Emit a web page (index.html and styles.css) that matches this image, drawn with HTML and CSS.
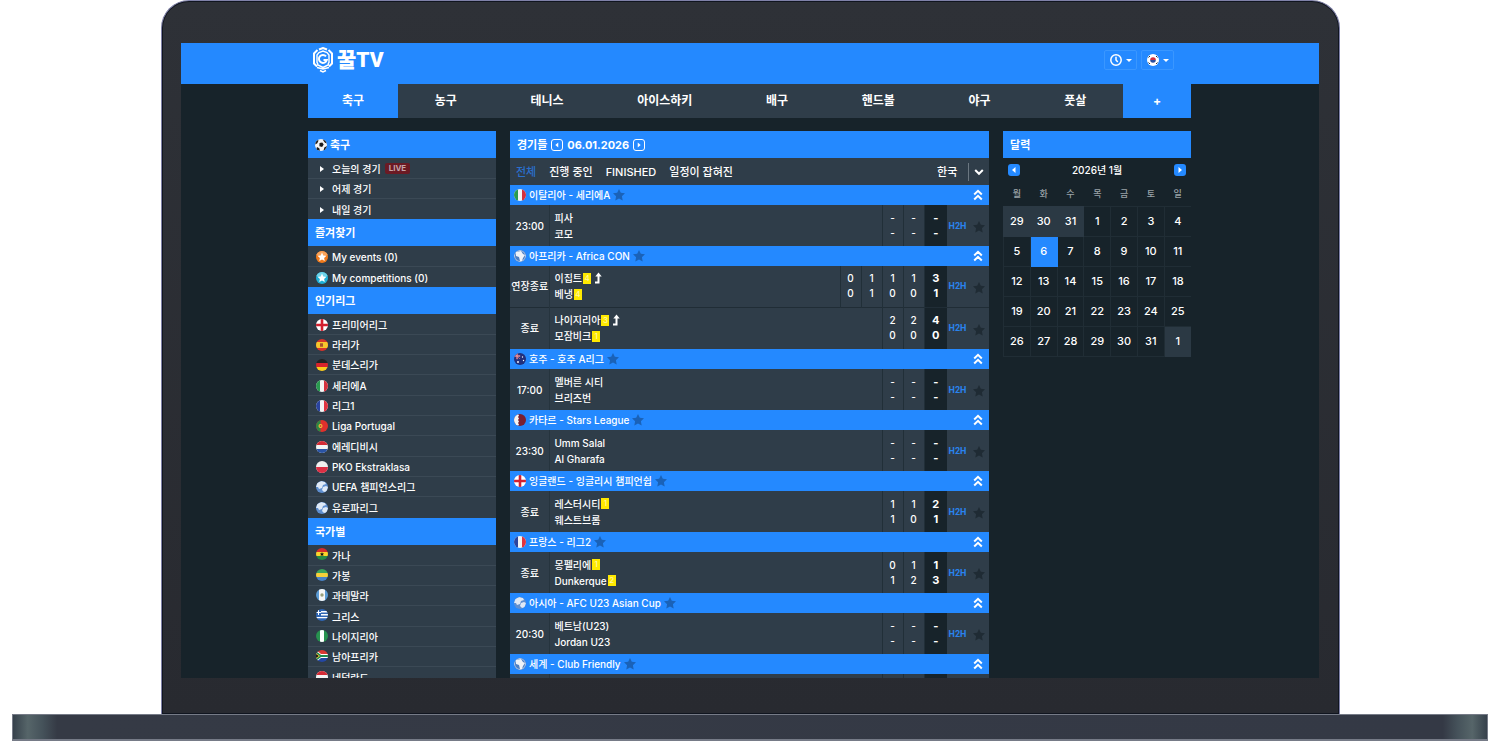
FILE: index.html
```html
<!DOCTYPE html>
<html lang="ko">
<head>
    <meta charset="UTF-8">
    <meta name="viewport" content="width=device-width, initial-scale=1.0">
    <title>꿀TV</title>
    <link rel="stylesheet" href="styles.css">
</head>
<body>
    <svg class="sprite" aria-hidden="true">
        <symbol id="ball" viewBox="0 0 12 12"><rect width="12" height="12" fill="#f4f4f4"/><path d="M4.5 4l2.8-.6 1.4 2.2-1.6 2.3-2.7-.6zM0 3l2-2 1.6.6L2.3 4.3.4 5.6zM8 0l3 1.6 1 3-2-.8-1.6-2zM2 8l2.3 1.3.6 2.7L1 11zM9.3 8.4L12 7v4l-3.6 1z" fill="#1b1b1b"/></symbol>
        <symbol id="star-orange" viewBox="0 0 12 12"><rect width="12" height="12" fill="#f07a1c"/><path d="M0 0h12v4Q6 6 0 4z" fill="#f9a35a"/><path d="M6 1.500l1.300 3 3.200.3-2.400 2.100.7 3.200L6 8.400l-2.800 1.700.7-3.200L1.500 4.800l3.200-.3z" fill="#fff"/></symbol>
        <symbol id="star-cyan" viewBox="0 0 12 12"><rect width="12" height="12" fill="#1fb0d8"/><path d="M0 0h12v4Q6 6 0 4z" fill="#6fd3ea"/><path d="M6 1.500l1.300 3 3.200.3-2.400 2.100.7 3.200L6 8.400l-2.800 1.700.7-3.200L1.500 4.800l3.200-.3z" fill="#fff"/></symbol>
        <symbol id="england" viewBox="0 0 12 12"><rect width="12" height="12" fill="#fff"/><path d="M4.700 0h2.600v12H4.700zM0 4.700h12v2.600H0z" fill="#d3202f"/></symbol>
        <symbol id="spain" viewBox="0 0 12 12"><rect width="12" height="12" fill="#d8342b"/><rect y="3" width="12" height="6" fill="#f8c62c"/><path d="M4 4.300h3v3.400H4z" fill="#a8542c"/></symbol>
        <symbol id="germany" viewBox="0 0 12 12"><rect width="12" height="4" fill="#222"/><rect y="4" width="12" height="4" fill="#d8232b"/><rect y="8" width="12" height="4" fill="#fbcb1d"/></symbol>
        <symbol id="italy" viewBox="0 0 12 12"><rect width="12" height="12" fill="#f4f4f4"/><rect width="4" height="12" fill="#2a9a50"/><rect x="8" width="4" height="12" fill="#d3303d"/></symbol>
        <symbol id="france" viewBox="0 0 12 12"><rect width="12" height="12" fill="#f4f4f4"/><rect width="4" height="12" fill="#2a449f"/><rect x="8" width="4" height="12" fill="#df3440"/></symbol>
        <symbol id="portugal" viewBox="0 0 12 12"><rect width="12" height="12" fill="#e0302d"/><rect width="4.500" height="12" fill="#2d8744"/><circle cx="4.500" cy="6" r="2" fill="#f5c53a"/><circle cx="4.500" cy="6" r="1" fill="#d83a35"/></symbol>
        <symbol id="netherlands" viewBox="0 0 12 12"><rect width="12" height="12" fill="#f4f4f4"/><rect width="12" height="4" fill="#d42b35"/><rect y="8" width="12" height="4" fill="#2a54a5"/></symbol>
        <symbol id="poland" viewBox="0 0 12 12"><rect width="12" height="12" fill="#f0f0f0"/><rect y="6" width="12" height="6" fill="#dc2f44"/></symbol>
        <symbol id="globe" viewBox="0 0 12 12"><rect width="12" height="12" fill="#5f8fd0"/><path d="M1 2l4-2 4 1 1 2-3 1-1 3-3 1-1-2-2 0zM7 6l3-1 2 1-1 4-3 1-2-2z" fill="#dfe9f6"/></symbol>
        <symbol id="africa" viewBox="0 0 12 12"><rect width="12" height="12" fill="#4d7fc4"/><circle cx="6" cy="6" r="5.500" fill="none" stroke="#b9cdea"/><path d="M2 2l5-1 2 3 2 1-2 3-1 3-2 0-1-4-3-1z" fill="#eef2f8"/></symbol>
        <symbol id="ghana" viewBox="0 0 12 12"><rect width="12" height="4" fill="#d52d2d"/><rect y="4" width="12" height="4" fill="#fbd32c"/><rect y="8" width="12" height="4" fill="#278a47"/><path d="M6 4l.6 1.500h1.500L7 6.500l.4 1.500L6 7.200 4.600 8 5 6.500 3.900 5.500h1.500z" fill="#111"/></symbol>
        <symbol id="gabon" viewBox="0 0 12 12"><rect width="12" height="4" fill="#3da35c"/><rect y="4" width="12" height="4" fill="#f6d03a"/><rect y="8" width="12" height="4" fill="#4a83c6"/></symbol>
        <symbol id="guatemala" viewBox="0 0 12 12"><rect width="12" height="12" fill="#5b9bd5"/><rect x="3" width="6" height="12" fill="#f6f6f6"/><circle cx="6" cy="6" r="1.700" fill="#9aa07c"/></symbol>
        <symbol id="greece" viewBox="0 0 12 12"><rect width="12" height="12" fill="#2f66b5"/><path d="M5 2h7v1.500H5zM5 5h7v1.500H5zM0 8h12v1.300H0zM0 3h5v1H0zM2 0h1v6H2z" fill="#fff"/></symbol>
        <symbol id="nigeria" viewBox="0 0 12 12"><rect width="12" height="12" fill="#27924f"/><rect x="4" width="4" height="12" fill="#fff"/></symbol>
        <symbol id="south-africa" viewBox="0 0 12 12"><rect width="12" height="6" fill="#d93a34"/><rect y="6" width="12" height="6" fill="#2447a3"/><path d="M0 0l5 4h7v4H5l-5 4z" fill="#fff"/><path d="M0 1l5 4h7v2H5l-5 4z" fill="#1f8a50"/><path d="M0 3l4 3-4 3z" fill="#f5c433"/><path d="M0 4l2.700 2L0 8z" fill="#111"/></symbol>
        <symbol id="australia" viewBox="0 0 12 12"><rect width="12" height="12" fill="#22307c"/><path d="M0 2.500h6v1H0zM2.600 0h1v6h-1zM0 0l6 6" fill="#e04852" stroke="#e8a0a8" stroke-width=".5"/><circle cx="8.500" cy="4" r=".7" fill="#fff"/><circle cx="9.500" cy="7.500" r=".7" fill="#fff"/><circle cx="4" cy="9" r=".9" fill="#fff"/></symbol>
        <symbol id="qatar" viewBox="0 0 12 12"><rect width="12" height="12" fill="#7a2030"/><path d="M0 0h4l1 1.500L4 3l1 1.500L4 6l1 1.500L4 9l1 1.500L4 12H0z" fill="#f4f4f4"/></symbol>
        <symbol id="korea" viewBox="0 0 12 12"><rect width="12" height="12" fill="#fff"/><path d="M3.200 6a2.800 2.800 0 015.600 0z" fill="#d5303e"/><path d="M3.200 6a2.800 2.800 0 005.600 0z" fill="#2a4fa0"/><path d="M1.500 3.500l1.500-1.500M9 2l1.500 1.500M1.500 8.500L3 10M9 10l1.500-1.500" stroke="#333" stroke-width="1"/></symbol>
        <symbol id="star" viewBox="0 0 12 12"><path d="M6 0l1.800 3.800 4.200.5-3.100 2.900.8 4.300L6 9.400l-3.700 2.100.8-4.300L0 4.300l4.200-.5z" fill="currentColor"/></symbol>
        <symbol id="chevrons" viewBox="0 0 10 12"><path d="M1.200 5.400L5 1.800l3.800 3.600M1.200 10.400L5 6.800l3.800 3.600" fill="none" stroke="currentColor" stroke-width="2"/></symbol>
        <symbol id="left" viewBox="0 0 12 12"><path d="M7.500 3v6L4 6z" fill="currentColor"/></symbol>
        <symbol id="right" viewBox="0 0 12 12"><path d="M4.500 3v6L8 6z" fill="currentColor"/></symbol>
        <symbol id="advance" viewBox="0 0 8 12"><path d="M1 10.500h3.500v-7" fill="none" stroke="currentColor" stroke-width="2"/><path d="M1.300 4.500L4.500.5l3.200 4z" fill="currentColor"/></symbol>
    </svg>

    <div class="laptop">
        <div class="lid">
            <div class="screen">
                <header class="topbar">
                    <div class="wrap topbar-inner">
                        <a class="logo" href="#">
                            <svg viewBox="0 0 22 26" aria-hidden="true" fill="none" stroke="#fff">
                                <path d="M7 2.500l4-1.500 4 1.500M5.500 3L2 6.500v10l3 3M16.500 3L20 6.500v10l-3 3" stroke-width="2"/>
                                <path d="M6 17l-1-1.500V8l2-2.500L11 4l4 1.500L17 8v7.500L16 17" stroke-width="1.400"/>
                                <path d="M14 9.300A4 4 0 1014.800 13H11.500" stroke-width="2"/>
                                <path d="M5 17.500l6 3 6-3M5 20.500l6 1.500 6-1.500M8 23.500l3 1.500 3-1.500" stroke-width="1.500"/>
                            </svg>
                            <span>꿀TV</span>
                        </a>
                        <div class="tools">
                            <button class="tool" aria-label="시간대">
                                <svg class="clock" viewBox="0 0 12 12" fill="none" stroke="#fff" stroke-width="1.500"><circle cx="6" cy="6" r="5.200"/><path d="M6 2.800V6l1.800 2"/></svg>
                                <span class="caret"></span>
                            </button>
                            <button class="tool" aria-label="언어">
                                <svg class="flag"><use href="#korea"/></svg>
                                <span class="caret"></span>
                            </button>
                        </div>
                    </div>
                </header>

                <nav class="wrap sports">
                    <a class="active" href="#">축구</a>
                    <a href="#">농구</a>
                    <a href="#">테니스</a>
                    <a href="#">아이스하키</a>
                    <a href="#">배구</a>
                    <a href="#">핸드볼</a>
                    <a href="#">야구</a>
                    <a href="#">풋살</a>
                    <a class="more" href="#">+</a>
                </nav>

                <div class="wrap columns">
                    <aside class="sidebar">
                        <h2><svg class="flag"><use href="#ball"/></svg>축구</h2>
                        <ul>
                            <li><a href="#"><span class="arrow"></span>오늘의 경기<b class="live">LIVE</b></a></li>
                            <li><a href="#"><span class="arrow"></span>어제 경기</a></li>
                            <li><a href="#"><span class="arrow"></span>내일 경기</a></li>
                        </ul>
                        <h2>즐겨찾기</h2>
                        <ul>
                            <li><a href="#"><svg class="flag"><use href="#star-orange"/></svg>My events (0)</a></li>
                            <li><a href="#"><svg class="flag"><use href="#star-cyan"/></svg>My competitions (0)</a></li>
                        </ul>
                        <h2>인기리그</h2>
                        <ul>
                            <li><a href="#"><svg class="flag"><use href="#england"/></svg>프리미어리그</a></li>
                            <li><a href="#"><svg class="flag"><use href="#spain"/></svg>라리가</a></li>
                            <li><a href="#"><svg class="flag"><use href="#germany"/></svg>분데스리가</a></li>
                            <li><a href="#"><svg class="flag"><use href="#italy"/></svg>세리에A</a></li>
                            <li><a href="#"><svg class="flag"><use href="#france"/></svg>리그1</a></li>
                            <li><a href="#"><svg class="flag"><use href="#portugal"/></svg>Liga Portugal</a></li>
                            <li><a href="#"><svg class="flag"><use href="#netherlands"/></svg>에레디비시</a></li>
                            <li><a href="#"><svg class="flag"><use href="#poland"/></svg>PKO Ekstraklasa</a></li>
                            <li><a href="#"><svg class="flag"><use href="#globe"/></svg>UEFA 챔피언스리그</a></li>
                            <li><a href="#"><svg class="flag"><use href="#globe"/></svg>유로파리그</a></li>
                        </ul>
                        <h2>국가별</h2>
                        <ul class="nations">
                            <li><a href="#"><svg class="flag"><use href="#ghana"/></svg>가나</a></li>
                            <li><a href="#"><svg class="flag"><use href="#gabon"/></svg>가봉</a></li>
                            <li><a href="#"><svg class="flag"><use href="#guatemala"/></svg>과테말라</a></li>
                            <li><a href="#"><svg class="flag"><use href="#greece"/></svg>그리스</a></li>
                            <li><a href="#"><svg class="flag"><use href="#nigeria"/></svg>나이지리아</a></li>
                            <li><a href="#"><svg class="flag"><use href="#south-africa"/></svg>남아프리카</a></li>
                            <li><a href="#"><svg class="flag"><use href="#netherlands"/></svg>네덜란드</a></li>
                        </ul>
                    </aside>

                    <main class="matches">
                        <h2>경기들
                            <button class="day" aria-label="이전 날짜"><svg><use href="#left"/></svg></button>
                            <span class="date">06.01.2026</span>
                            <button class="day" aria-label="다음 날짜"><svg><use href="#right"/></svg></button>
                        </h2>
                        <div class="filters">
                            <button class="active">전체</button>
                            <button>진행 중인</button>
                            <button>FINISHED</button>
                            <button>일정이 잡혀진</button>
                            <div class="country">
                                <select aria-label="국가"><option>한국</option></select>
                                <svg viewBox="0 0 10 10"><path d="M1.200 3L5 6.800 8.800 3" fill="none" stroke="#fff" stroke-width="2"/></svg>
                            </div>
                        </div>
                        <div id="leagues"></div>
                    </main>

                    <aside class="calendar">
                        <h2>달력</h2>
                        <div class="month">
                            <button aria-label="이전 달"><svg><use href="#left"/></svg></button>
                            <span>2026년 1월</span>
                            <button aria-label="다음 달"><svg><use href="#right"/></svg></button>
                        </div>
                        <table>
                            <thead>
                                <tr><th>월</th><th>화</th><th>수</th><th>목</th><th>금</th><th>토</th><th>일</th></tr>
                            </thead>
                            <tbody>
                                <tr><td class="out">29</td><td class="out">30</td><td class="out">31</td><td>1</td><td>2</td><td>3</td><td>4</td></tr>
                                <tr><td>5</td><td class="today">6</td><td>7</td><td>8</td><td>9</td><td>10</td><td>11</td></tr>
                                <tr><td>12</td><td>13</td><td>14</td><td>15</td><td>16</td><td>17</td><td>18</td></tr>
                                <tr><td>19</td><td>20</td><td>21</td><td>22</td><td>23</td><td>24</td><td>25</td></tr>
                                <tr><td>26</td><td>27</td><td>28</td><td>29</td><td>30</td><td>31</td><td class="out">1</td></tr>
                            </tbody>
                        </table>
                    </aside>
                </div>
            </div>
        </div>
        <div class="base"></div>
    </div>

    <script>
        // team: [name, yellow cards, advanced]
        const none = [['-', '-'], ['-', '-'], ['-', '-']];
        const leagues = [
            { flag: 'italy', name: '이탈리아 - 세리에A', games: [
                { time: '23:00', home: ['피사'], away: ['코모'], scores: none }
            ] },
            { flag: 'africa', name: '아프리카 - Africa CON', games: [
                { time: '연장종료', home: ['이집트', 4, true], away: ['베냉', 4], scores: [[0, 0], [1, 1], [1, 0], [1, 0], [3, 1]] },
                { time: '종료', home: ['나이지리아', 3, true], away: ['모잠비크', 1], scores: [[2, 0], [2, 0], [4, 0]] }
            ] },
            { flag: 'australia', name: '호주 - 호주 A리그', games: [
                { time: '17:00', home: ['멜버른 시티'], away: ['브리즈번'], scores: none }
            ] },
            { flag: 'qatar', name: '카타르 - Stars League', games: [
                { time: '23:30', home: ['Umm Salal'], away: ['Al Gharafa'], scores: none }
            ] },
            { flag: 'england', name: '잉글랜드 - 잉글리시 챔피언쉽', games: [
                { time: '종료', home: ['레스터시티', 1], away: ['웨스트브롬'], scores: [[1, 1], [1, 0], [2, 1]] }
            ] },
            { flag: 'france', name: '프랑스 - 리그2', games: [
                { time: '종료', home: ['몽펠리에', 1], away: ['Dunkerque', 2], scores: [[0, 1], [1, 2], [1, 3]] }
            ] },
            { flag: 'globe', name: '아시아 - AFC U23 Asian Cup', games: [
                { time: '20:30', home: ['베트남(U23)'], away: ['Jordan U23'], scores: none }
            ] },
            { flag: 'africa', name: '세계 - Club Friendly', games: [
                { time: '', home: [''], away: [''], scores: [['', ''], ['', ''], ['', '']], pending: true }
            ] }
        ];

        function team([name, cards, advanced]) {
            return `<div class="team">${name}` +
                (cards ? `<span class="card">${cards}</span>` : '') +
                (advanced ? '<svg class="advance"><use href="#advance"/></svg>' : '') +
                '</div>';
        }

        function game(g) {
            const last = g.scores.length - 1;
            const cells = g.scores.map(([a, b], i) =>
                `<td class="score${i === last ? ' total' : ''}"><div>${a}</div><div>${b}</div></td>`).join('');
            return `
                <tr>
                    <td class="time">${g.time}</td>
                    <td class="teams" colspan="${6 - g.scores.length}">${team(g.home)}${team(g.away)}</td>
                    ${cells}
                    <td class="h2h">${g.pending ? '' : '<a href="#">H2H</a>'}</td>
                    <td class="fav"><button aria-label="즐겨찾기"><svg class="star"><use href="#star"/></svg></button></td>
                </tr>`;
        }

        document.getElementById('leagues').innerHTML = leagues.map(l => `
            <section class="league">
                <h3>
                    <svg class="flag"><use href="#${l.flag}"/></svg>${l.name}
                    <button aria-label="즐겨찾기"><svg class="star"><use href="#star"/></svg></button>
                    <button class="toggle" aria-label="접기"><svg><use href="#chevrons"/></svg></button>
                </h3>
                <table>
                    <colgroup>
                        <col class="c-time"><col><col class="c-score"><col class="c-score"><col class="c-score">
                        <col class="c-score"><col class="c-total"><col class="c-score"><col class="c-score">
                    </colgroup>
                    ${l.games.map(game).join('')}
                </table>
            </section>`).join('');
    </script>
</body>
</html>
```

FILE: styles.css
```css
* {
    box-sizing: border-box;
}
body {
    margin: 0;
    background: #fff;
    color: #fff;
    font-family: Inter, "Noto Sans CJK KR", sans-serif;
    font-size: 10px;
    font-weight: 500;
    line-height: 16px;
}
a {
    color: inherit;
    text-decoration: none;
}
button {
    display: inline-flex;
    align-items: center;
    justify-content: center;
    padding: 0;
    border: 0;
    background: none;
    color: inherit;
    font: inherit;
    cursor: pointer;
}
ul {
    list-style: none;
    margin: 0;
    padding: 0;
}
table {
    width: 100%;
    table-layout: fixed;
    border-collapse: collapse;
}
td, th {
    padding: 0;
}
.sprite {
    display: none;
}
.laptop {
    display: flex;
    flex-direction: column;
    height: 100vh;
    padding-bottom: 1px;
}
.lid {
    flex: 1;
    min-height: 0;
    width: 78.6%;
    margin: 0 auto;
    padding: 42px 20px 36px 19px;
    border: 1px solid #7f81a8;
    border-bottom: 0;
    border-radius: 28px 28px 0 0;
    background: linear-gradient(#2e3137, #282a30);
    box-shadow: inset 0 0 0 1px #10151f;
}
.screen {
    height: 100%;
    overflow: hidden;
    background: #17232a;
}
.base {
    width: 98.4%;
    height: 27px;
    margin: 0 auto;
    border: 1px solid #767b87;
    border-width: 1px 1px 2px;
    background: linear-gradient(90deg, #36414b, #566569 1%, #45525a 2%, #353a45 3%, #343945 97%, #45525a 98%, #566569 99%, #36414b);
}
.wrap {
    width: 77.6%;
    margin: 0 auto;
}

/* header */
.topbar {
    background: #2489ff;
}
.topbar-inner {
    display: flex;
    align-items: center;
    justify-content: space-between;
    height: 41px;
    padding: 0 17px 7px 4px;
}
.logo {
    display: flex;
    align-items: center;
    gap: 3px;
    font-family: Roboto, "Noto Sans CJK KR", sans-serif;
    font-size: 21px;
    font-weight: 900;
    line-height: 26px;
}
.logo svg {
    width: 22px;
    height: 26px;
}
.tools {
    display: flex;
    gap: 4px;
}
.tool {
    gap: 4px;
    width: 33px;
    height: 20px;
    border: 1px solid #3a97ff;
    border-radius: 2px;
}
.clock {
    width: 12px;
    height: 12px;
}
.caret {
    border: 3px solid transparent;
    border-top-color: #fff;
    border-bottom: 0;
}
.flag {
    flex: none;
    width: 12px;
    height: 12px;
    border-radius: 50%;
}
.sports {
    display: flex;
    background: #2f3d49;
    font-size: 12px;
    font-weight: 700;
    line-height: 34px;
    text-align: center;
}
.sports a {
    flex: 1 1 auto;
}
.sports .active {
    flex: 0 0 90px;
    background: #2489ff;
}
.sports .more {
    flex: 0 0 68px;
    background: #2489ff;
}

/* columns */
.columns {
    display: grid;
    grid-template-columns: 188px minmax(0, 1fr) 188px;
    align-items: start;
    gap: 14px;
    padding-top: 13px;
}
h2 {
    display: flex;
    align-items: center;
    gap: 3px;
    height: 27px;
    margin: 0;
    padding: 0 7px;
    background: #2489ff;
    font-size: 11px;
    font-weight: 700;
}
.sidebar li {
    height: 20px;
    border-bottom: 1px solid #3b4955;
    background: #2f3d49;
}
.sidebar li:nth-child(3n + 1) {
    height: 21px;
}
.sidebar li:last-child {
    border-bottom: 0;
}
.sidebar li a {
    display: flex;
    align-items: center;
    gap: 4px;
    height: 100%;
    padding: 1px 0 0 8px;
}
.nations .flag {
    margin-bottom: 3px;
}
.arrow {
    width: 4px;
    margin: 0 4px;
    border: 3px solid transparent;
    border-left: 4px solid #fff;
    border-right: 0;
}
.live {
    padding: 0 4px;
    border-radius: 2px;
    background: #6b1a24;
    color: #c5a4a8;
    font-size: 8px;
    line-height: 11px;
}

/* matches */
.matches h2 {
    gap: 4px;
}
.day {
    border: 1px solid #fff;
    border-radius: 3px;
}
.day svg {
    width: 10px;
    height: 10px;
}
.filters {
    display: flex;
    align-items: center;
    gap: 13px;
    height: 27px;
    padding-left: 6px;
    background: #2f3d49;
    font-size: 11px;
}
.filters .active {
    color: #2a6fcd;
}
.country {
    display: flex;
    align-items: center;
    margin-left: auto;
}
.country select {
    width: 31px;
    padding: 0;
    border: 0;
    appearance: none;
    background: none;
    color: inherit;
    font: inherit;
    line-height: 18px;
}
.country svg {
    width: 21px;
    height: 18px;
    padding: 4px 5px;
    border-left: 1px solid #6b7781;
}
.league h3 {
    display: flex;
    align-items: center;
    gap: 3px;
    height: 20px;
    margin: 0;
    padding: 0 6px 0 4px;
    background: #2489ff;
    font-size: 10px;
    font-weight: 500;
}
.star {
    width: 12px;
    height: 12px;
}
.league h3 .star {
    color: #1a62b8;
}
.toggle {
    margin-left: auto;
}
.toggle svg {
    width: 10px;
    height: 12px;
}
.c-time {
    width: 40px;
}
.c-score {
    width: 21px;
}
.c-total {
    width: 23px;
}
.league tr {
    height: 41px;
    background: #2f3d49;
}
.league tr + tr {
    height: 42px;
    border-top: 1px solid #202d36;
}
.time {
    border-right: 1px solid #26343e;
    text-align: center;
    white-space: nowrap;
}
.teams {
    padding-left: 4px;
}
.team {
    display: flex;
    align-items: center;
    height: 16px;
}
.card {
    width: 8px;
    margin-left: 1px;
    background: #ffe900;
    color: #fff6a0;
    font-size: 8px;
    line-height: 11px;
    text-align: center;
}
.advance {
    width: 8px;
    height: 12px;
    margin-left: 3px;
}
.score {
    border-left: 1px solid #212f38;
    line-height: 15px;
    text-align: center;
}
.total {
    background: #17232a;
    font-size: 11px;
    font-weight: 700;
}
.h2h {
    color: #2a83ee;
    font-family: Roboto, sans-serif;
    font-size: 9px;
    font-weight: 700;
    text-align: center;
}
.fav {
    color: #1f2b34;
    text-align: center;
}
.fav button {
    vertical-align: middle;
}

/* calendar */
.month {
    display: flex;
    align-items: center;
    justify-content: space-between;
    height: 24px;
    padding: 0 5px;
}
.month button {
    border-radius: 3px;
    background: #2489ff;
}
.month svg {
    width: 12px;
    height: 12px;
}
.calendar th {
    height: 24px;
    color: #9aa2a7;
    font-size: 9px;
    font-weight: 500;
}
.calendar td {
    height: 30px;
    border: 1px solid #202d35;
    font-size: 11px;
    text-align: center;
}
.calendar td:last-child {
    border-right: 0;
}
.calendar .out {
    border-color: #2b3944;
    background: #2b3944;
}
.calendar .today {
    border-color: #2489ff;
    background: #2489ff;
}
```
